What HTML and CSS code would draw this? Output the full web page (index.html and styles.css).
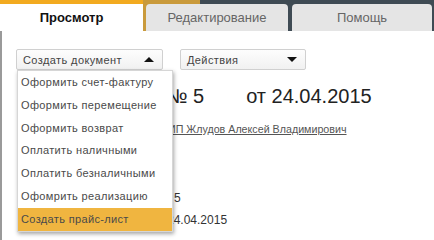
FILE: index.html
```html
<!DOCTYPE HTML>
<html>

<head>
  <title>Документ</title>
  <meta name="viewport" content="width=device-width, initial-scale=1.0">
  <link rel="stylesheet" href="styles.css">
</head>

<body>
  <div class="tabs">
    <div class="tab active">Просмотр</div>
    <div class="tab">Редактирование</div>
    <div class="tab last">Помощь</div>
  </div>

  <!-- -------------------------------------------------------------------- -->

  <div class="content">
    <div class="toolbar">
      <div class="dropdown">
        <button class="btn btn-doc">Создать документ <span class="arrow up"></span></button>
        <ul class="menu">
          <li>Оформить счет-фактуру</li>
          <li>Оформить перемещение</li>
          <li>Оформить возврат</li>
          <li>Оплатить наличными</li>
          <li>Оплатить безналичными</li>
          <li>Офомрить реализацию</li>
          <li class="selected">Создать прайс-лист</li>
        </ul>
      </div>
      <button class="btn btn-actions">Действия <span class="arrow down"></span></button>
    </div>

    <div class="doc">
      <h2 class="doc-title"><span class="num">№ 5</span><span class="date">от 24.04.2015</span></h2>
      <p class="client"><a href="#">ИП Жлудов Алексей Владимирович</a></p>
      <div class="rows">
        <div class="row num-row">5</div>
        <div class="row">24.04.2015</div>
      </div>
    </div>
  </div>
</body>

</html>
```

FILE: styles.css
```css
html {
  font-family: "Liberation Sans", Arial, sans-serif;
}

body {
  margin: 0px;
  background-color: white;
}

/* ------------------------------- TABS -------------------------------- */

.tabs {
  display: flex;
  height: 31px;
  background: linear-gradient(to right, #c99a3c 200px, #3f4b54 200px);
}

.tab {
  width: 142px;
  margin-top: 4px;
  margin-left: 3px;
  background-color: #e5e5e5;
  border-radius: 4px 4px 0 0;
  color: #666;
  font-size: 13px;
  line-height: 27px;
  text-align: center;
}

.tab.last {
  width: 140px;
  margin-left: 4px;
}

.tab.active {
  width: 143px;
  margin: 0px;
  border-top: 4px solid #f2aa1f;
  border-radius: 0;
  background-color: white;
  color: #111;
  font-weight: bold;
}

/* ------------------------------ CONTENT ------------------------------ */

.content {
  min-height: 209px;
  border-left: 2px solid #9a9a9a;
  box-sizing: border-box;
}

.toolbar {
  display: flex;
  gap: 17px;
  padding: 18px 0 0 14px;
}

.dropdown {
  position: relative;
}

.btn {
  display: flex;
  align-items: center;
  justify-content: space-between;
  height: 21px;
  padding: 0 8px 0 6px;
  border: 1px solid #d0d0d0;
  border-radius: 2px;
  background: linear-gradient(#fdfdfd, #f1f1f1);
  color: #444;
  font-family: inherit;
  font-size: 11px;
  letter-spacing: 0.4px;
}

.btn-doc {
  width: 147px;
}

.btn-actions {
  width: 126px;
}

.arrow {
  width: 0;
  height: 0;
  border-left: 5px solid transparent;
  border-right: 5px solid transparent;
}

.arrow.up {
  border-bottom: 5px solid #111;
}

.arrow.down {
  border-top: 5px solid #111;
}

/* ------------------------------- MENU -------------------------------- */

.menu {
  position: absolute;
  top: 21px;
  left: 1px;
  z-index: 2;
  width: 154px;
  margin: 0;
  padding: 0;
  list-style: none;
  background-color: white;
  border: 1px solid #d6d6d6;
  box-shadow: 1px 2px 4px rgba(0, 0, 0, .35);
}

.menu li {
  height: 22.8px;
  padding-left: 3px;
  color: #4a4a4a;
  font-size: 11px;
  letter-spacing: 0.35px;
  line-height: 23px;
  white-space: nowrap;
}

.menu li.selected {
  background-color: #f0b540;
}

/* ------------------------------ DOCUMENT ----------------------------- */

.doc {
  padding-left: 164px;
}

.doc-title {
  display: flex;
  gap: 42px;
  margin: 15px 0 0 0;
  color: #222;
  font-size: 20px;
  font-weight: normal;
}

.client {
  margin: 15px 0 0 2px;
  font-size: 10.7px;
}

.client a {
  color: #555;
}

.rows {
  margin: 52px 0 0 1px;
  font-size: 12px;
  color: #333;
}

.row {
  height: 22px;
  line-height: 22px;
}

.num-row {
  padding-left: 7px;
}
```
